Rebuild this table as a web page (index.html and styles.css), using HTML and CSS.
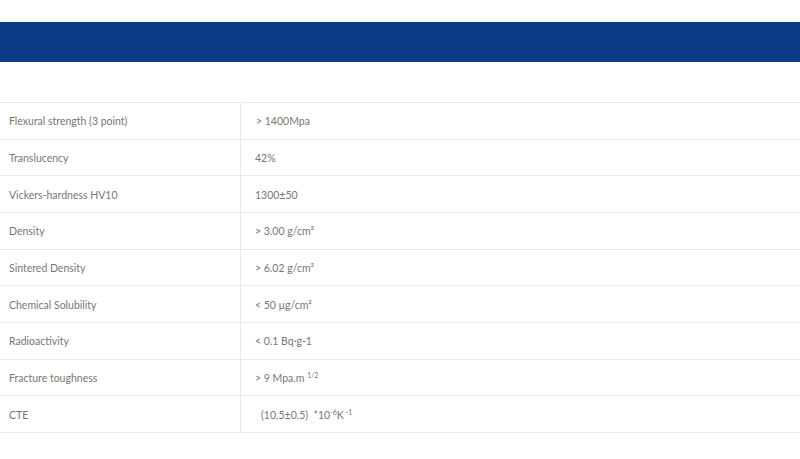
FILE: index.html
```html
<!DOCTYPE html>
<html>
<head>
<meta charset="utf-8">
<link rel="stylesheet" href="styles.css">
</head>
<body>
<div class="top-space"></div>
<div class="banner"></div>
<div class="gap"></div>
<table class="spec">
  <tr><td class="k">Flexural strength (3 point)</td><td class="v"><span class="ind1">&gt; 1400Mpa</span></td></tr>
  <tr class="dot"><td class="k">Translucency</td><td class="v">42%</td></tr>
  <tr><td class="k">Vickers-hardness HV10</td><td class="v">1300±50</td></tr>
  <tr class="dot"><td class="k">Density</td><td class="v">&gt; 3.00 g/cm³</td></tr>
  <tr><td class="k">Sintered Density</td><td class="v">&gt; 6.02 g/cm³</td></tr>
  <tr class="dot"><td class="k">Chemical Solubility</td><td class="v">&lt; 50 μg/cm²</td></tr>
  <tr><td class="k">Radioactivity</td><td class="v">&lt; 0.1 Bq·g-1</td></tr>
  <tr class="dot"><td class="k">Fracture toughness</td><td class="v">&gt; 9 Mpa.m <sup>1/2</sup></td></tr>
  <tr><td class="k">CTE</td><td class="v"><span class="ind2">(10.5±0.5)&nbsp; *10<sup>-6</sup>K<sup> -1</sup></span></td></tr>
</table>
</body>
</html>
```
FILE: styles.css
```css
html, body {
  margin: 0;
  padding: 0;
  background: #ffffff;
}
body {
  font-family: Lato, "Open Sans", sans-serif;
  color: #777777;
}
.top-space {
  height: 22px;
}
.banner {
  height: 40px;
  background: #0b3a87;
}
.gap {
  height: 40px;
}
.spec {
  width: 100%;
  border-collapse: collapse;
  font-size: 10.5px;
}
.spec tr {
  height: 36.67px;
  border-top: 1px solid #e9e9e9;
  border-bottom: 1px solid #e9e9e9;
}
.spec tr.dot {
  border-top: 1px dotted #e6e6e6;
}
.spec td {
  padding: 1px 9px 0;
  vertical-align: middle;
}
.spec td.k {
  width: 222px;
  border-right: 1px solid #e9e9e9;
}
.spec td.v {
  padding-left: 14px;
}
.ind1 {
  padding-left: 1px;
}
.ind2 {
  padding-left: 6px;
}
.spec sup {
  font-size: 7px;
  vertical-align: 4px;
  line-height: 0;
}
```
